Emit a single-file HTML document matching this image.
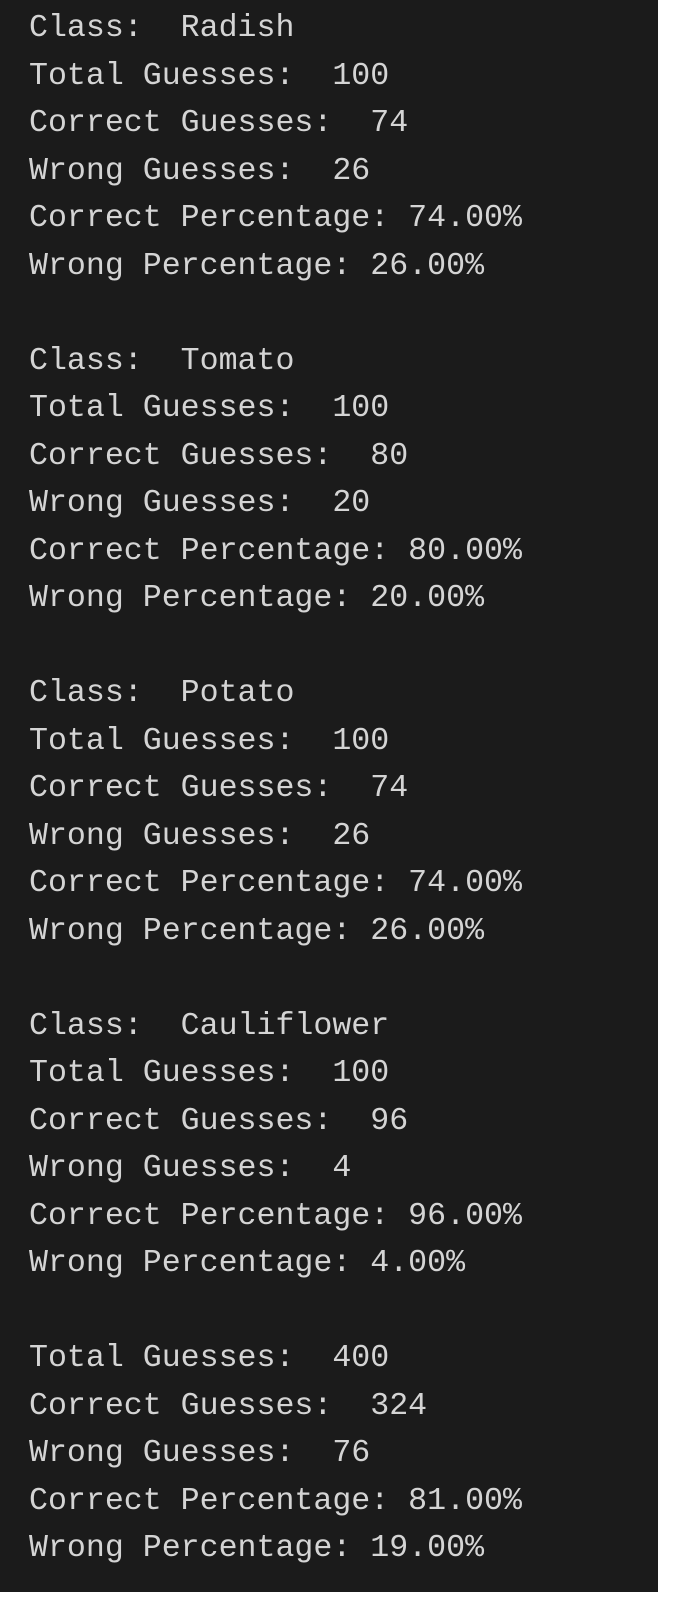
<!DOCTYPE html>
<html><head><meta charset="utf-8"><style>
html,body{margin:0;padding:0;background:#fff;width:674px;height:1605px;overflow:hidden}
.box{position:absolute;left:0;top:0;width:658px;height:1592px;background:#1b1b1b}
pre{margin:0;position:absolute;left:29px;top:5px;font-family:"Liberation Mono",monospace;font-size:31.6px;line-height:47.5px;color:#d4d4d4}
</style></head><body><div class="box"><pre>Class:  Radish
Total Guesses:  100
Correct Guesses:  74
Wrong Guesses:  26
Correct Percentage: 74.00%
Wrong Percentage: 26.00%

Class:  Tomato
Total Guesses:  100
Correct Guesses:  80
Wrong Guesses:  20
Correct Percentage: 80.00%
Wrong Percentage: 20.00%

Class:  Potato
Total Guesses:  100
Correct Guesses:  74
Wrong Guesses:  26
Correct Percentage: 74.00%
Wrong Percentage: 26.00%

Class:  Cauliflower
Total Guesses:  100
Correct Guesses:  96
Wrong Guesses:  4
Correct Percentage: 96.00%
Wrong Percentage: 4.00%

Total Guesses:  400
Correct Guesses:  324
Wrong Guesses:  76
Correct Percentage: 81.00%
Wrong Percentage: 19.00%</pre></div></body></html>
